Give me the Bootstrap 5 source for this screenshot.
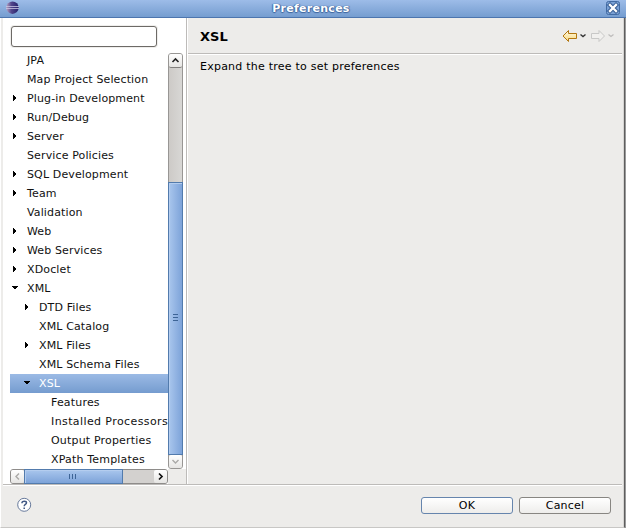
<!DOCTYPE html>
<html lang="en">
<head>
<meta charset="utf-8">
<title>Preferences</title>
<link href="https://cdn.jsdelivr.net/npm/bootstrap@5.3.0/dist/css/bootstrap.min.css" rel="stylesheet">
<style>
html,body{height:100%;overflow:hidden}
body{font:11px/19px "DejaVu Sans",sans-serif;color:#000;background:#edecea;letter-spacing:.13px}
svg{display:block;flex:none}
.window{width:626px;height:528px}
.titlebar{height:18px;background:linear-gradient(#9dbce8,#759dd0);border-bottom:1px solid #4c75ae}
.titlebar .logo{margin-left:5px}
.caption{color:#fff;font-weight:bold;line-height:17px;letter-spacing:.27px;text-shadow:0 1px 1px #3c649d,1px 0 1px #3c649d,-1px 0 1px #4c75ae;margin-right:4px}
.close-btn{margin-right:6px;margin-top:1px}
.frame{border-left:1px solid #fff;border-right:1px solid #5e5e5e;border-bottom:1px solid #c8c7c5;margin-right:1px;box-shadow:1px 0 #9a9a9a,inset -1px 0 #d6d5d3}
.upper{height:466px;margin-left:2px;margin-right:2px}
.side{width:183px;background:#fff;padding-left:7px}
.filter{width:146px;height:21px;margin:8px 0 4px 1px;border:1px solid #6d6a66;border-radius:3px;box-shadow:0 0 0 1px #efeeec;padding:0 3px;outline:0;font-size:11px;background:#fff}
.tree{width:158px;height:418px;overflow:hidden;white-space:nowrap;color:#111}
.tree-row{height:19px;line-height:19px;padding-left:2px}
.tree-row svg{width:15px;height:19px}
.lv1{padding-left:14px}.lv2{padding-left:26px;letter-spacing:.18px}
.wide{letter-spacing:.4px}
.picked{background:linear-gradient(#9bbae5,#759ccf);color:#fff}
.vbar{width:15px;height:416px;margin-top:2px;background:linear-gradient(90deg,#cdcac7,#d8d7d5);border:1px solid #989694;border-radius:3px}
.hbar{width:158px;height:15px;background:#d3d1cf;border:1px solid #8e8c8a;border-radius:3px}
.arrow-btn{width:13px;height:13px;background:linear-gradient(#fff,#e6e5e3);border-radius:2px}
.up{border-bottom:1px solid #817f7d;height:14px}
.vthumb{height:273px;margin:0 -1px;padding-bottom:2px;background:linear-gradient(90deg,#a9c6ed,#7da3d9);border:1px solid #527bad;box-shadow:inset 1px 1px #b4cdef}
.hthumb{width:99px;margin:-1px 0;padding-right:2px;background:linear-gradient(#a9c6ed,#7da3d9);border:1px solid #527bad;box-shadow:inset 1px 1px #b4cdef}
.corner{width:18px;height:15px;background:#edecea}
.split{width:2px;background:linear-gradient(90deg,#bdbbb9 50%,#fff 50%)}
.head{height:35px;padding:0 6px 0 12px}
.head h1{font:bold 13px/19px "DejaVu Sans",sans-serif;letter-spacing:0;margin:1px 0 0}
.rule{height:2px;border-top:1px solid #bdbbb9;background:#fff}
.lower-rule{margin:0 2px}
.message{padding:2px 12px;letter-spacing:.23px}
.footer{padding:11px 13px 0 16px}
.btn-row{gap:6px}
.dlg-btn{width:92px;height:17px;border:1px solid #888682;border-radius:3px;background:linear-gradient(#fff,#eeedeb);font-size:11px;line-height:14px;padding:0;color:#000;letter-spacing:.2px}
.dlg-btn.default{border-color:#6685ad}
</style>
<script src="https://cdn.jsdelivr.net/npm/bootstrap@5.3.0/dist/js/bootstrap.bundle.min.js"></script>
</head>
<body>
<svg width="0" height="0" class="position-absolute">
<symbol id="closed" viewBox="0 0 15 19"><path d="M1 6h1v1h1v1h1v2H3v1H2v1H1z" fill="#000"/></symbol>
<symbol id="open" viewBox="0 0 15 19"><path d="M0 7h6v1H5v1H4v1H2V9H1V8H0z" fill="#000"/></symbol>
</svg>
<div class="window d-flex flex-column">
  <header class="titlebar d-flex justify-content-between align-items-start">
    <svg class="logo" width="15" height="15" viewBox="0 0 15 15"><defs><linearGradient id="g" x2="1"><stop stop-color="#b9a1c1"/><stop offset=".4" stop-color="#53478c"/><stop offset="1" stop-color="#24206a"/></linearGradient></defs><circle cx="7.5" cy="7.7" r="6.2" fill="url(#g)"/><path d="M1 6.5h13M1 8.500h13" stroke="#c9c6e3" stroke-width=".8"/></svg>
    <div class="caption">Preferences</div>
    <svg class="close-btn" width="14" height="14" viewBox="0 0 14 14"><rect x=".5" y=".5" width="13" height="13" rx="2" fill="#7ba1d4" stroke="#426ba3"/><path d="M4 4l6 6m0-6l-6 6" stroke="#365d94" stroke-width="4.4" stroke-linecap="square"/><path d="M4 4l6 6m0-6l-6 6" stroke="#fff" stroke-width="2.3" stroke-linecap="square"/></svg>
  </header>
  <main class="frame flex-grow-1">
    <div class="upper d-flex border-0">
      <aside class="side">
        <input class="filter d-block" aria-label="Filter">
        <div class="d-flex">
          <div class="tree">
            <div class="tree-row d-flex"><svg></svg>JPA</div>
            <div class="tree-row d-flex"><svg></svg>Map Project Selection</div>
            <div class="tree-row d-flex"><svg><use href="#closed"/></svg>Plug-in Development</div>
            <div class="tree-row d-flex"><svg><use href="#closed"/></svg>Run/Debug</div>
            <div class="tree-row d-flex"><svg><use href="#closed"/></svg>Server</div>
            <div class="tree-row d-flex"><svg></svg>Service Policies</div>
            <div class="tree-row d-flex"><svg><use href="#closed"/></svg>SQL Development</div>
            <div class="tree-row d-flex"><svg><use href="#closed"/></svg>Team</div>
            <div class="tree-row d-flex"><svg></svg>Validation</div>
            <div class="tree-row d-flex"><svg><use href="#closed"/></svg>Web</div>
            <div class="tree-row d-flex"><svg><use href="#closed"/></svg>Web Services</div>
            <div class="tree-row d-flex"><svg><use href="#closed"/></svg>XDoclet</div>
            <div class="tree-row d-flex"><svg><use href="#open"/></svg>XML</div>
            <div class="tree-row lv1 d-flex"><svg><use href="#closed"/></svg>DTD Files</div>
            <div class="tree-row lv1 d-flex"><svg></svg>XML Catalog</div>
            <div class="tree-row lv1 d-flex"><svg><use href="#closed"/></svg>XML Files</div>
            <div class="tree-row lv1 d-flex"><svg></svg>XML Schema Files</div>
            <div class="tree-row lv1 d-flex picked"><svg><use href="#open"/></svg>XSL</div>
            <div class="tree-row lv2 d-flex"><svg></svg>Features</div>
            <div class="tree-row lv2 wide d-flex"><svg></svg>Installed Processors</div>
            <div class="tree-row lv2 d-flex"><svg></svg>Output Properties</div>
            <div class="tree-row lv2 d-flex"><svg></svg>XPath Templates</div>
          </div>
          <div class="vbar d-flex flex-column">
            <div class="arrow-btn up"><svg width="13" height="13"><path d="M3.5 8L6.5 5l3 3" fill="none" stroke="#222" stroke-width="1.6"/></svg></div>
            <div class="vthumb mt-auto d-flex align-items-center justify-content-center"><svg width="5" height="7"><path d="M0 .5h5M0 3.5h5M0 6.5h5" stroke="#3d6496"/></svg></div>
            <div class="arrow-btn"><svg width="13" height="13"><path d="M3.5 5L6.5 8l3-3" fill="none" stroke="#aaa9a7" stroke-width="1.4"/></svg></div>
          </div>
        </div>
        <div class="d-flex">
          <div class="hbar d-flex">
            <div class="arrow-btn"><svg width="13" height="13"><path d="M8 3.5L5 6.5l3 3" fill="none" stroke="#aaa9a7" stroke-width="1.4"/></svg></div>
            <div class="hthumb d-flex align-items-center justify-content-center"><svg width="7" height="5"><path d="M.5 0v5M3.5 0v5M6.5 0v5" stroke="#3d6496"/></svg></div>
            <div class="arrow-btn ms-auto"><svg width="13" height="13"><path d="M5 3.5l3 3-3 3" fill="none" stroke="#111" stroke-width="1.7"/></svg></div>
          </div>
          <div class="corner"></div>
        </div>
      </aside>
      <div class="split"></div>
      <section class="flex-grow-1">
        <div class="head d-flex align-items-center justify-content-between">
          <h1>XSL</h1>
          <svg width="54" height="14" viewBox="0 0 54 14" fill="none"><defs><linearGradient id="y" x2="0" y2="1"><stop stop-color="#fffbe6"/><stop offset="1" stop-color="#f9d87c"/></linearGradient></defs><path d="M1 7L6.500 1.500V4.500H14.500V9.500H6.500V12.500z" fill="url(#y)" stroke="#b37710"/><path d="M18.500 5.500l2.500 2 2.500-2" stroke="#333" stroke-width="1.400"/><path d="M42.500 7L37 1.500V4.500H29.500V9.500H37V12.500z" fill="#f1f0ee" stroke="#c8c8c7"/><path d="M46.500 5.500l2.500 2 2.500-2" stroke="#bdbcbb" stroke-width="1.200"/></svg>
        </div>
        <div class="rule"></div>
        <div class="message">Expand the tree to set preferences</div>
      </section>
    </div>
    <div class="rule lower-rule"></div>
    <footer class="footer d-flex justify-content-between align-items-start">
      <svg class="help" width="15" height="15" viewBox="0 0 15 15"><circle cx="7.2" cy="7.8" r="6.500" fill="#fff" stroke="#67799b"/><path d="M5 6.300V5.700C5 3.600 9.500 3.600 9.500 5.800c0 1.700-2.300 1.600-2.300 3.400M7.200 10.400v1.600" fill="none" stroke="#405884" stroke-width="1.500"/></svg>
      <div class="btn-row d-flex">
        <button class="dlg-btn default">OK</button><button class="dlg-btn">Cancel</button>
      </div>
    </footer>
  </main>
</div>
</body>
</html>
